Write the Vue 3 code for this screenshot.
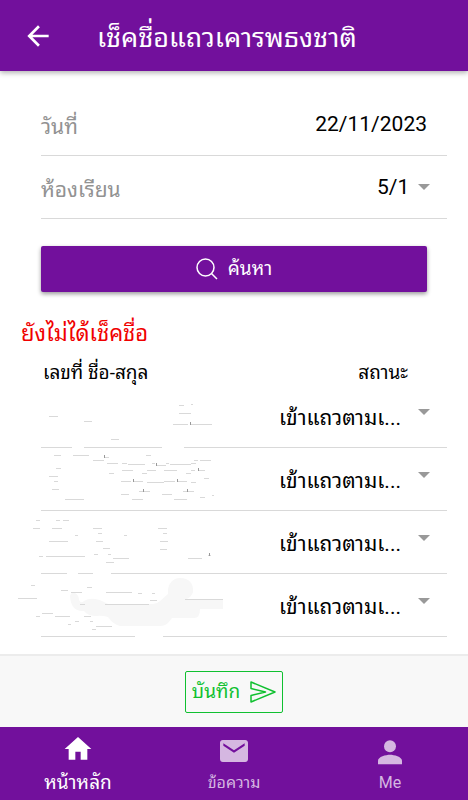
<template>
  <div class="app">
    <header class="toolbar">
      <button class="icon-btn" type="button" aria-label="Back">
        <svg width="32" height="32" viewBox="0 0 24 24" fill="currentColor">
          <path d="M20 11H7.83l5.59-5.59L12 4l-8 8 8 8 1.41-1.41L7.83 13H20v-2z"/>
        </svg>
      </button>
      <h1>เช็คชื่อแถวเคารพธงชาติ</h1>
    </header>

    <main class="content">
      <form class="filters" @submit.prevent>
        <div class="field">
          <label for="date">วันที่</label>
          <input id="date" v-model="date" type="text">
        </div>
        <div class="field">
          <label for="room">ห้องเรียน</label>
          <div class="picker">
            <select id="room" v-model="room">
              <option>5/1</option>
            </select>
            <span class="caret"></span>
          </div>
        </div>
        <button class="search-btn" type="submit">
          <svg width="22" height="22" viewBox="0 0 22 22" fill="none" stroke="currentColor" stroke-width="1.5">
            <circle cx="9.5" cy="9.5" r="8.5"/>
            <path d="M15.5 15.5L21 21"/>
          </svg>
          <span>ค้นหา</span>
        </button>
      </form>

      <p class="notice">ยังไม่ได้เช็คชื่อ</p>

      <table class="students">
        <thead>
          <tr>
            <th scope="col">เลขที่ ชื่อ-สกุล</th>
            <th scope="col" class="status">สถานะ</th>
          </tr>
        </thead>
        <tbody>
          <tr v-for="(row, i) in rows" :key="i">
            <td>
              <svg class="smudge" width="200" height="62" viewBox="0 0 200 62" aria-hidden="true">
                <path v-if="row.blob" :d="row.blob" fill="#f7f7f7"/>
                <rect v-for="(g, n) in row.gaps" :key="'g' + n" :x="g[0]" y="62" :width="g[1]" height="1" fill="#fff"/>
                <rect v-for="(s, n) in row.marks" :key="'m' + n" :x="s[0]" :y="s[1]" :width="s[2]" height="1" fill="#d9d9d9"/>
                <rect v-for="(t, n) in row.ticks" :key="'t' + n" :x="t[0]" :y="t[1]" width="1" height="3" fill="#999"/>
              </svg>
            </td>
            <td class="status">
              <div class="picker">
                <select v-model="row.status" :aria-label="'สถานะ ' + (i + 1)">
                  <option>เข้าแถวตามเ...</option>
                </select>
                <span class="caret"></span>
              </div>
            </td>
          </tr>
        </tbody>
      </table>
    </main>

    <footer class="actions">
      <button class="save-btn" type="button">
        <span>บันทึก</span>
        <svg width="26" height="22" viewBox="0 0 26 22" fill="none" stroke="currentColor" stroke-width="1.5" stroke-linejoin="round">
          <path d="M1 1L25 11L1 21V14.500L15.500 11L1 7.500Z"/>
        </svg>
      </button>
    </footer>

    <nav class="tabs">
      <a href="#" class="tab active">
        <svg width="32" height="32" viewBox="0 0 24 24" fill="currentColor">
          <path d="M10 20v-6h4v6h5v-8h3L12 3 2 12h3v8z"/>
        </svg>
        <span>หน้าหลัก</span>
      </a>
      <a href="#" class="tab">
        <svg width="32" height="32" viewBox="0 0 24 24" fill="currentColor">
          <path d="M20.400 3.700H3.600c-1.200 0-2.100.9-2.100 2.100v12.400c0 1.200.9 2.100 2.100 2.100h16.800c1.200 0 2.100-.9 2.100-2.100V5.800c0-1.200-.9-2.100-2.100-2.100zm-.4 4.300l-8 5.300L4 8V6.200l8 5.300 8-5.300z"/>
        </svg>
        <span>ข้อความ</span>
      </a>
      <a href="#" class="tab">
        <svg width="32" height="32" viewBox="0 0 24 24" fill="currentColor">
          <circle cx="12" cy="8.500" r="4.500"/>
          <path d="M12 14.800c-3 0-9 1.500-9 4.500v2.700h18v-2.700c0-3-6-4.500-9-4.500z"/>
        </svg>
        <span>Me</span>
      </a>
    </nav>
  </div>
</template>

<script setup>
import { ref } from 'vue'

const date = ref('22/11/2023')
const room = ref('5/1')

// marks: [x, y, width], ticks: [x, y], gaps in the row divider: [x, width]
const rows = ref([
  {
    status: 'เข้าแถวตามเ...',
    marks: [[8, 31, 9], [43, 36, 8], [70, 54, 8], [138, 20, 5], [150, 19, 2], [138, 28, 12], [132, 39, 15], [149, 39, 22]],
    ticks: [[149, 37]],
    gaps: [[31, 12], [121, 22]]
  },
  {
    status: 'เข้าแถวตามเ...',
    marks: [
      [13, 7, 7], [32, 7, 16], [52, 12, 11], [63, 9, 5], [66, 15, 11], [81, 15, 5], [87, 16, 17], [105, 7, 5],
      [111, 15, 3], [115, 17, 10], [125, 15, 3], [129, 16, 21], [150, 15, 5], [153, 12, 4], [159, 12, 11],
      [157, 22, 7], [150, 22, 4], [81, 22, 11], [106, 22, 9], [123, 22, 13], [68, 25, 5], [101, 25, 5], [145, 25, 5],
      [15, 20, 5], [8, 28, 9], [13, 33, 4], [11, 41, 7], [80, 33, 10], [92, 33, 10], [106, 34, 17], [123, 33, 11],
      [136, 33, 10], [150, 34, 5], [163, 30, 5], [98, 43, 11], [142, 43, 11], [80, 46, 8], [121, 46, 10],
      [159, 49, 5], [171, 47, 2], [24, 51, 19], [91, 51, 11], [133, 51, 13]
    ],
    ticks: [[63, 7], [115, 15], [157, 20], [92, 31], [136, 31], [102, 41], [146, 41]],
    gaps: []
  },
  {
    status: 'เข้าแถวตามเ...',
    marks: [
      [-5, 9, 4], [15, 9, 4], [22, 9, 6], [-8, 17, 7], [11, 17, 10], [52, 17, 9], [117, 17, 9], [57, 22, 4],
      [122, 22, 4], [34, 24, 3], [83, 24, 3], [8, 30, 19], [55, 30, 7], [119, 30, 8], [62, 37, 7], [119, 38, 7],
      [53, 43, 4], [67, 43, 3], [-2, 45, 4], [5, 45, 39], [72, 47, 16], [147, 47, 14], [167, 44, 3], [65, 51, 8]
    ],
    ticks: [[168, 42]],
    gaps: [[26, 11], [52, 18]]
  },
  {
    status: 'เข้าแถวตามเ...',
    blob: 'M29 22Q30 18 34 19Q38 21 38 26Q40 30 43 27Q51 22 63 28L67 30H112Q116 30 119 27L127 20C126 10 132 4 139 4C148 4 153 10 152 18Q151 22 146 25H182V35H159Q159 44 153 44H131L127 49Q124 52 119 52H79Q73 51 67 43Q60 41 55 42Q47 42 43 37Q30 38 29 22Z',
    marks: [
      [-10, 11, 4], [20, 16, 7], [46, 13, 5], [30, 18, 11], [65, 18, 26], [97, 19, 4], [111, 19, 3], [-23, 24, 19],
      [39, 30, 5], [64, 30, 44], [109, 26, 7], [144, 25, 38], [1, 39, 11], [-5, 42, 4], [14, 42, 15], [43, 42, 7],
      [27, 50, 3], [34, 47, 4], [49, 47, 3], [55, 52, 16], [51, 55, 4]
    ],
    ticks: [],
    gaps: [[94, 28]]
  }
])
</script>

<style>
body { background: #fff; }
</style>

<style scoped>
.app {
  min-height: 100vh;
  display: flex;
  flex-direction: column;
  color: #000;
  font-family: Roboto, 'Noto Sans Thai Looped', Loma, Waree, Garuda, 'Noto Sans Thai', 'Noto Sans', sans-serif;
  font-size: 21px;
}

.app * { box-sizing: border-box; }

button, input, select {
  font: inherit;
  color: inherit;
  background: none;
  border: 0;
  margin: 0;
  padding: 0;
  appearance: none;
}

svg { display: block; flex-shrink: 0; }

.toolbar {
  height: 71px;
  padding: 0 22px;
  display: flex;
  align-items: center;
  gap: 43px;
  background: #72109c;
  color: #fff;
  box-shadow: 0 2px 5px rgba(0, 0, 0, 0.3);
}

.toolbar h1 {
  margin: 0;
  padding-top: 4px;
  font-size: 27px;
  font-weight: 400;
  line-height: 40px;
}

.content {
  flex: 1;
  padding: 22px 21px 17px;
}

.filters { padding-left: 20px; }

.field {
  height: 63px;
  padding-right: 20px;
  display: flex;
  align-items: center;
  justify-content: space-between;
  border-bottom: 1px solid #d9d9d9;
}

.field label { color: #929292; }

.field input {
  width: 160px;
  text-align: right;
}

.picker {
  display: flex;
  align-items: center;
}

.field .picker { gap: 8px; }

.caret {
  margin-right: -3px;
  border: 6px solid transparent;
  border-top-color: #999;
  border-bottom: 0;
}

.search-btn {
  width: calc(100% - 20px);
  height: 46px;
  margin: 27px 0 24px;
  display: flex;
  align-items: center;
  justify-content: center;
  gap: 10px;
  border-radius: 2px;
  background: #72109c;
  color: #fff;
  font-size: 19px;
  line-height: 24px;
  box-shadow: 0 2px 4px rgba(0, 0, 0, 0.4);
}

.notice {
  margin: 0;
  color: #f00000;
  font-size: 22px;
  line-height: 36px;
}

.students {
  width: calc(100% - 20px);
  margin-left: 20px;
  border-collapse: separate;
  border-spacing: 0;
}

.students th {
  height: 33px;
  padding: 8px 2px 0;
  font-size: 19px;
  font-weight: 400;
  line-height: 24px;
  text-align: left;
}

.students th.status {
  padding-right: 39px;
  text-align: right;
}

.students td {
  height: 63px;
  padding: 0;
  border-bottom: 1px solid #d9d9d9;
}

.students .picker {
  justify-content: flex-end;
  gap: 17px;
  padding: 4px 20px 0 0;
}

.students .caret { margin-bottom: 12px; }

.smudge { overflow: visible; }

.actions {
  height: 73px;
  display: flex;
  align-items: center;
  justify-content: center;
  border-top: 2px solid #ececec;
  background: #f8f8f8;
}

.save-btn {
  height: 42px;
  padding: 0 6px;
  display: flex;
  align-items: center;
  gap: 10px;
  border: 1px solid #10c030;
  border-radius: 2px;
  color: #10c030;
  font-size: 19px;
  line-height: 24px;
}

.tabs {
  height: 73px;
  display: grid;
  grid-template-columns: repeat(3, 1fr);
  background: #72109c;
}

.tab {
  display: flex;
  flex-direction: column;
  align-items: center;
  padding-top: 8px;
  color: #d5b7e1;
  font-size: 16px;
  line-height: 32px;
  text-decoration: none;
}

.tab.active {
  padding-top: 6px;
  color: #fff;
  font-size: 19px;
  line-height: 36px;
}
</style>
